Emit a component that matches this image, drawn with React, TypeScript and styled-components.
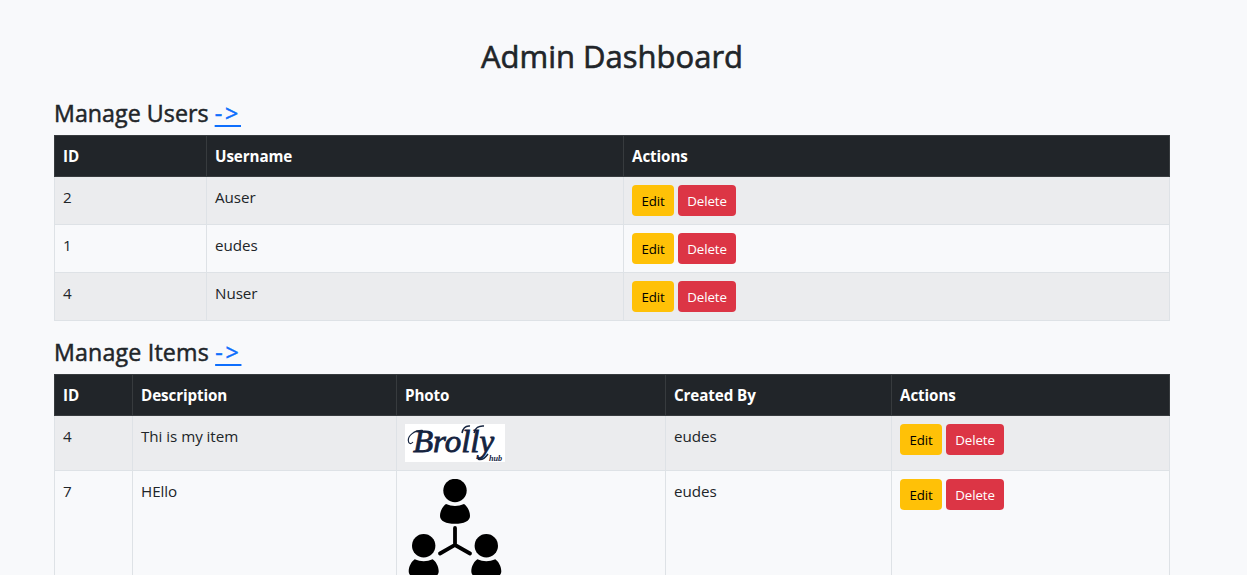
import React from "react";
import styled, { createGlobalStyle } from "styled-components";

const GlobalStyle = createGlobalStyle`
  *, *::before, *::after { box-sizing: border-box; }
  body {
    margin: 0;
    background: #f8f9fb;
    color: #212529;
    font-family: "Segoe UI", "Open Sans", "Noto Sans", sans-serif;
    font-size: 15.2px;
    line-height: 24px;
    letter-spacing: -0.05px;
  }
`;

const Page = styled.main`
  height: 100vh;
  overflow: hidden;
  padding: 36px 77px 0 54px;
`;

const Title = styled.h1`
  margin: 0 0 24px;
  height: 38px;
  font-size: 31px;
  font-weight: 500;
  line-height: 41px;
  letter-spacing: 0;
  text-align: center;
  -webkit-text-stroke: 0.6px currentColor;
`;

const SectionTitle = styled.h2<{ $tracking: number }>`
  margin: 0 0 8px;
  height: 29px;
  font-size: 23.2px;
  font-weight: 500;
  line-height: 31px;
  letter-spacing: ${(p) => p.$tracking}px;
  white-space: nowrap;
  -webkit-text-stroke: 0.5px currentColor;
`;

const SectionLink = styled.a`
  color: #0d6efd;
  text-decoration: underline;
  text-decoration-thickness: 2px;
  text-underline-offset: 3px;
  letter-spacing: 2.8px;
`;

const Table = styled.table`
  width: 1116px;
  margin: 0 0 16px;
  table-layout: fixed;
  border-collapse: collapse;
`;

const HeadCell = styled.th`
  height: 41px;
  padding: 8px;
  border: 1px solid #373b3e;
  background: #212529;
  color: #fff;
  font-weight: 700;
  letter-spacing: -0.1px;
  text-align: left;
`;

const Cell = styled.td`
  padding: 8px;
  border: 1px solid #dee2e6;
  vertical-align: top;
`;

const Row = styled.tr<{ $striped: boolean }>`
  background: ${(p) => (p.$striped ? "#ebecee" : "transparent")};
`;

const Actions = styled.div`
  display: flex;
  gap: 4px;
`;

const Button = styled.button<{ $danger?: boolean }>`
  width: ${(p) => (p.$danger ? 58 : 42)}px;
  height: 31px;
  padding: 2px 0 0;
  border: 0;
  border-radius: 4px;
  background: ${(p) => (p.$danger ? "#dc3545" : "#ffc107")};
  color: ${(p) => (p.$danger ? "#fff" : "#000")};
  font-family: inherit;
  font-size: 13.3px;
  line-height: 21px;
  letter-spacing: -0.1px;
`;

const Picture = styled.svg`
  display: block;
`;

const RowActions = () => (
  <Actions>
    <Button>Edit</Button>
    <Button $danger>Delete</Button>
  </Actions>
);

const BrollyLogo = () => (
  <Picture width="100" height="38" viewBox="0 0 100 38">
    <rect width="100" height="38" fill="#fff" />
    <g fill="#14233f" fontFamily="'Liberation Serif', serif" fontStyle="italic">
      <text x="8" y="28" fontSize="32" textLength="81" lengthAdjust="spacingAndGlyphs" stroke="#14233f" strokeWidth="0.8">
        Brolly
      </text>
      <text x="84" y="36.5" fontSize="7.5" fontWeight="700" textLength="13" lengthAdjust="spacingAndGlyphs">
        hub
      </text>
    </g>
    <path d="M18 6.500C9 6 3 12 3.300 16.500C3.500 20 6 20.500 8 18" fill="none" stroke="#14233f" strokeWidth="1.200" />
    <path d="M73 35C76 36.500 80 34 83 30" fill="none" stroke="#14233f" strokeWidth="1.500" />
    <path d="M57 9C58 4 61 1.500 65 2M69 9C70 4 74 1.500 79 2" fill="none" stroke="#14233f" strokeWidth="1.500" />
  </Picture>
);

const Person = ({ x, y }: { x: number; y: number }) => (
  <g transform={`translate(${x} ${y})`}>
    <circle cx="0" cy="11.500" r="11.700" />
    <path d="M-9 25Q0 29 9 25C12 27 15 32 15 37C15 42 9 44.800 0 44.800S-15 42-15 37C-15 32-12 27-9 25Z" />
  </g>
);

const NetworkPicture = () => (
  <Picture width="100" height="100" viewBox="0 0 100 100">
    <Person x={50} y={0} />
    <Person x={18.7} y={55.3} />
    <Person x={81.3} y={55.3} />
    <path d="M50 49V66L35 74.500M50 66L65 74.500" fill="none" stroke="#000" strokeWidth="3.800" strokeLinecap="round" />
  </Picture>
);

interface DataTableProps {
  widths: number[];
  heads: string[];
  rows: React.ReactNode[][];
}

const DataTable = ({ widths, heads, rows }: DataTableProps) => (
  <Table>
    <colgroup>
      {widths.map((w, i) => (
        <col key={i} width={w} />
      ))}
    </colgroup>
    <thead>
      <tr>
        {heads.map((h) => (
          <HeadCell key={h}>{h}</HeadCell>
        ))}
      </tr>
    </thead>
    <tbody>
      {rows.map((cells, r) => (
        <Row key={r} $striped={r % 2 === 0}>
          {cells.map((c, i) => (
            <Cell key={i}>{c}</Cell>
          ))}
          <Cell>
            <RowActions />
          </Cell>
        </Row>
      ))}
    </tbody>
  </Table>
);

export default function App() {
  return (
    <>
      <GlobalStyle />
      <Page>
        <Title>Admin Dashboard</Title>
        <SectionTitle $tracking={0.05}>
          Manage Users <SectionLink href="#users">-&gt;</SectionLink>
        </SectionTitle>
        <DataTable
          widths={[152, 417, 546]}
          heads={["ID", "Username", "Actions"]}
          rows={[
            ["2", "Auser"],
            ["1", "eudes"],
            ["4", "Nuser"],
          ]}
        />
        <SectionTitle $tracking={0.18}>
          Manage Items <SectionLink href="#items">-&gt;</SectionLink>
        </SectionTitle>
        <DataTable
          widths={[78, 264, 269, 226, 278]}
          heads={["ID", "Description", "Photo", "Created By", "Actions"]}
          rows={[
            ["4", "Thi is my item", <BrollyLogo />, "eudes"],
            ["7", "HEllo", <NetworkPicture />, "eudes"],
          ]}
        />
      </Page>
    </>
  );
}
